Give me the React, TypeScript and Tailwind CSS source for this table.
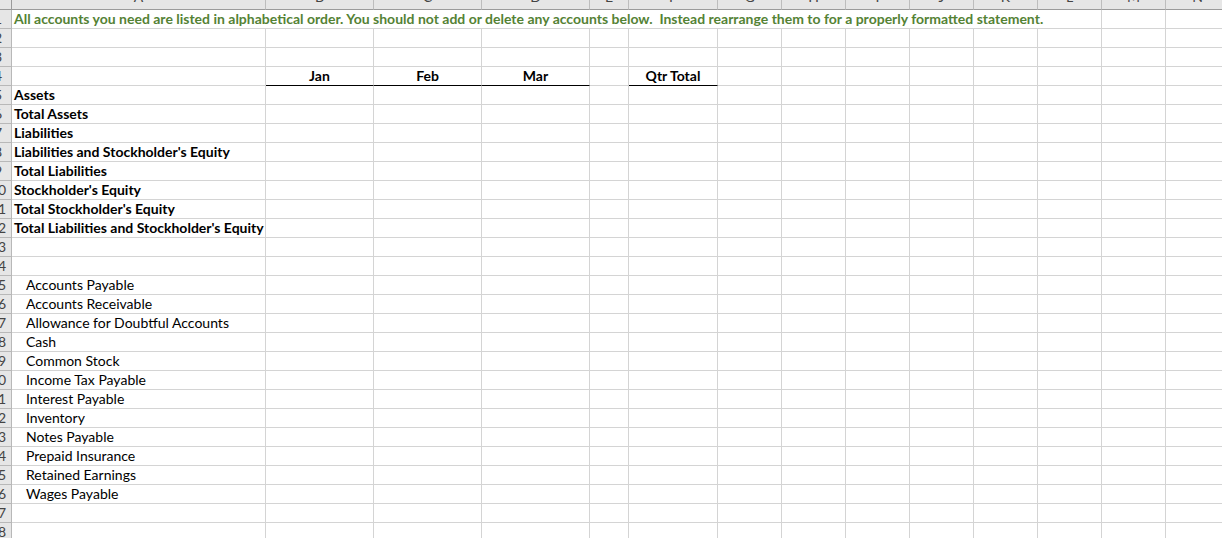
const columns = ["A", "B", "C", "D", "E", "F", "G", "H", "I", "J", "K", "L", "M", "N"];

type Row = { label?: string; bold?: boolean; indent?: boolean };

const rows: Row[] = [
  {},
  {},
  {},
  {},
  { label: "Assets", bold: true },
  { label: "Total Assets", bold: true },
  { label: "Liabilities", bold: true },
  { label: "Liabilities and Stockholder's Equity", bold: true },
  { label: "Total Liabilities", bold: true },
  { label: "Stockholder's Equity", bold: true },
  { label: "Total Stockholder's Equity", bold: true },
  { label: "Total Liabilities and Stockholder's Equity", bold: true },
  {},
  {},
  { label: "Accounts Payable", indent: true },
  { label: "Accounts Receivable", indent: true },
  { label: "Allowance for Doubtful Accounts", indent: true },
  { label: "Cash", indent: true },
  { label: "Common Stock", indent: true },
  { label: "Income Tax Payable", indent: true },
  { label: "Interest Payable", indent: true },
  { label: "Inventory", indent: true },
  { label: "Notes Payable", indent: true },
  { label: "Prepaid Insurance", indent: true },
  { label: "Retained Earnings", indent: true },
  { label: "Wages Payable", indent: true },
  {},
  {},
];

const cell = "h-[19px] border-r border-b border-[#d4d4d4] flex items-end overflow-hidden whitespace-nowrap";

function RowNumber({ n }: { n: number }) {
  return (
    <div className="h-[19px] bg-[#e6e6e6] border-r border-b border-[#b8b8b8] overflow-hidden flex items-end">
      <div className="w-[24px] -ml-[14px] shrink-0 text-center text-[#444444] leading-[18px]">{n}</div>
    </div>
  );
}

export default function App() {
  return (
    <div
      className="w-[1222px] h-[538px] overflow-hidden bg-white text-[14px] text-black"
      style={{ fontFamily: "Lato, 'Liberation Sans', sans-serif" }}
    >
      <div className="grid grid-cols-[12px_254px_108px_108px_108px_39px_89px_repeat(8,64px)] w-[1230px]">
        {/* Column header strip, cut at the top */}
        <div className="h-[10px] bg-[#e6e6e6] border-r border-b border-[#9b9b9b]"></div>
        {columns.map((c) => (
          <div
            key={c}
            className="h-[10px] bg-[#e6e6e6] border-r border-b border-[#bdbdbd] border-b-[#9b9b9b] overflow-hidden flex items-end justify-center"
          >
            <span className="text-[#444444] leading-[18px] mb-[3px]">{c}</span>
          </div>
        ))}

        {rows.map((row, i) => {
          const n = i + 1;

          if (n === 1) {
            return [
              <RowNumber key="n1" n={1} />,
              <div key="r1" className={`${cell} col-span-12 pl-[2px]`}>
                <span className="font-bold text-[#548235] leading-[18px]">
                  All accounts you need are listed in alphabetical order. You should not add or delete any accounts below.&nbsp; Instead rearrange them to for a properly formatted statement.
                </span>
              </div>,
              <div key="r1m" className={cell}></div>,
              <div key="r1n" className={cell}></div>,
            ];
          }

          if (n === 4) {
            const heads = ["Jan", "Feb", "Mar"];
            return [
              <RowNumber key="n4" n={4} />,
              <div key="r4a" className={cell}></div>,
              ...heads.map((h) => (
                <div key={h} className={`${cell} justify-center border-b-black font-bold`}>
                  <span className="leading-[18px]">{h}</span>
                </div>
              )),
              <div key="r4e" className={cell}></div>,
              <div key="r4f" className={`${cell} justify-center border-b-black font-bold`}>
                <span className="leading-[18px]">Qtr Total</span>
              </div>,
              ...columns.slice(6).map((c) => <div key={`r4${c}`} className={cell}></div>),
            ];
          }

          return [
            <RowNumber key={`n${n}`} n={n} />,
            <div
              key={`a${n}`}
              className={`${cell} ${row.indent ? "pl-[14px]" : "pl-[2px]"} ${row.bold ? "font-bold" : ""}`}
            >
              <span className="leading-[18px]">{row.label}</span>
            </div>,
            ...columns.slice(1).map((c) => <div key={`${c}${n}`} className={cell}></div>),
          ];
        })}
      </div>
    </div>
  );
}
